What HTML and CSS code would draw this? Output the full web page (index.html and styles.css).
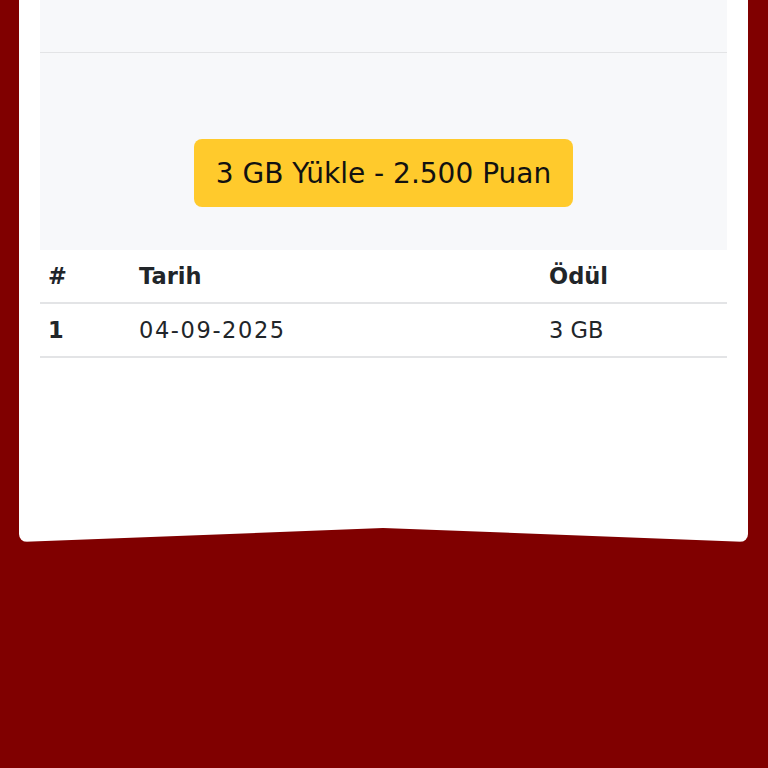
FILE: index.html
```html
<!DOCTYPE html>
<html lang="tr">
<head>
<meta charset="utf-8">
<link rel="stylesheet" href="styles.css">
</head>
<body>
<div class="page">
  <div class="card">
    <div class="panel">
      <div class="panel-top"></div>
      <div class="panel-body">
        <button class="load-btn">3 GB Yükle - 2.500 Puan</button>
      </div>
    </div>
    <table class="history">
      <thead>
        <tr><th class="c-num">#</th><th class="c-date">Tarih</th><th class="c-prize">Ödül</th></tr>
      </thead>
      <tbody>
        <tr><td class="c-num">1</td><td class="c-date date">04-09-2025</td><td class="c-prize">3 GB</td></tr>
      </tbody>
    </table>
    <svg class="notch" viewBox="0 0 729 14" preserveAspectRatio="none"><polygon points="0,14 364,0 729,14" fill="#800000"/></svg>
  </div>
</div>
</body>
</html>
```
FILE: styles.css
```css
html, body {
  margin: 0;
  padding: 0;
  background: #800000;
  height: 768px;
  overflow: hidden;
}
.page {
  padding: 0 20px 0 19px;
  font-family: "DejaVu Sans", "Noto Sans", sans-serif;
  color: #212529;
}
.card {
  position: relative;
  background: #fff;
  height: 542px;
  border-radius: 0 0 8px 8px;
  padding: 0 21px;
  box-sizing: border-box;
}
.panel {
  background: #f7f8fa;
}
.panel-top {
  height: 52px;
  border-bottom: 1.5px solid #e3e4e6;
}
.panel-body {
  display: flex;
  justify-content: center;
  padding: 86px 0 43px;
}
.load-btn {
  font-family: inherit;
  font-size: 28px;
  color: #111;
  background: #ffca2c;
  border: none;
  border-radius: 8px;
  width: 379px;
  height: 68px;
  padding: 0;
}
.history {
  width: 100%;
  border-collapse: collapse;
  font-size: 22.5px;
}
.history th, .history td {
  text-align: left;
  padding: 0 8px;
  height: 52px;
  border-bottom: 2px solid #e3e4e6;
}
.history th { font-weight: 700; }
.history td.c-num { font-weight: 700; }
.history .date { letter-spacing: 1.6px; }
.c-num { width: 75px; }
.c-prize { width: 170px; }
.notch {
  position: absolute;
  left: 0;
  bottom: 0;
  width: 100%;
  height: 14px;
  display: block;
}
```
